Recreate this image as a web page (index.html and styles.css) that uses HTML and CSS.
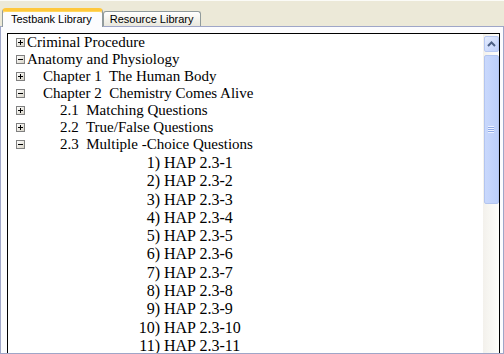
FILE: index.html
```html
<!DOCTYPE html>
<html lang="en">
<head>
    <meta charset="UTF-8">
    <title>Testbank Library</title>
    <link rel="stylesheet" href="styles.css">
</head>
<body>
    <div class="tabs">
        <div class="tab active">Testbank Library</div>
        <div class="tab">Resource Library</div>
    </div>

    <div class="panel">
        <div class="tree-box">
            <div class="tree">
                <!-- top level -->
                <div class="node"><span class="toggle plus"></span><span class="label">Criminal Procedure</span></div>
                <div class="node"><span class="toggle minus"></span><span class="label">Anatomy and Physiology</span></div>
                <!-- chapters -->
                <div class="node"><span class="toggle plus"></span><span class="label lvl-1">Chapter 1  The Human Body</span></div>
                <div class="node"><span class="toggle minus"></span><span class="label lvl-1">Chapter 2  Chemistry Comes Alive</span></div>
                <!-- sections -->
                <div class="node"><span class="toggle plus"></span><span class="label lvl-2">2.1  Matching Questions</span></div>
                <div class="node"><span class="toggle plus"></span><span class="label lvl-2">2.2  True/False Questions</span></div>
                <div class="node"><span class="toggle minus"></span><span class="label lvl-2">2.3  Multiple -Choice Questions</span></div>
                <!-- questions -->
                <div class="questions">
                    <div class="question"><span class="num">1)</span> HAP 2.3-1</div>
                    <div class="question"><span class="num">2)</span> HAP 2.3-2</div>
                    <div class="question"><span class="num">3)</span> HAP 2.3-3</div>
                    <div class="question"><span class="num">4)</span> HAP 2.3-4</div>
                    <div class="question"><span class="num">5)</span> HAP 2.3-5</div>
                    <div class="question"><span class="num">6)</span> HAP 2.3-6</div>
                    <div class="question"><span class="num">7)</span> HAP 2.3-7</div>
                    <div class="question"><span class="num">8)</span> HAP 2.3-8</div>
                    <div class="question"><span class="num">9)</span> HAP 2.3-9</div>
                    <div class="question"><span class="num">10)</span> HAP 2.3-10</div>
                    <div class="question"><span class="num">11)</span> HAP 2.3-11</div>
                </div>
            </div>

            <div class="scrollbar">
                <div class="scroll-btn">
                    <svg width="9" height="6" viewBox="0 0 9 6"><path d="M1 5 L4.5 1.5 L8 5" fill="none" stroke="#4d6185" stroke-width="2"/></svg>
                </div>
                <div class="thumb"><span class="grip"></span></div>
            </div>
        </div>
    </div>
</body>
</html>
```

FILE: styles.css
```css
body {
    margin: 0;
    background-color: #ece9d8;
    border-top: 1px solid #fbfbf7;
    height: 353px;
    overflow: hidden;
}
.tabs {
    display: flex;
    align-items: flex-end;
    height: 25px;
    padding-left: 2px;
    font-family: 'Liberation Sans', Arial, sans-serif;
    font-size: 11px;
    color: #000;
}
.tab {
    height: 14px;
    line-height: 14px;
    padding: 0 7px 0 6px;
    border: 1px solid #919b9c;
    border-bottom: none;
    border-radius: 3px 3px 0 0;
    background: linear-gradient(#ffffff, #f2f1ea 60%, #e9e7dd);
}
.tab.active {
    height: 16px;
    line-height: 17px;
    padding: 0 10px 0 8px;
    border-top: 3px solid #ffc83c;
    border-radius: 4px 4px 0 0;
    box-shadow: inset 0 1px 0 #ffd65e;
    background: #fcfcfe;
    position: relative;
    z-index: 1;
    margin-bottom: -1px;
}
.panel {
    height: 320px;
    border: 1px solid #9fa6c8;
    background-color: #fcfcfe;
    padding: 6px 3px 0 6px;
    overflow: hidden;
}
.tree-box {
    display: flex;
    height: 330px;
    border: 1px solid #000;
    background-color: #fff;
}
.tree {
    flex: 1;
    font-family: 'Liberation Serif', 'Times New Roman', serif;
    font-size: 15px;
    color: #000;
}
.node {
    display: flex;
    align-items: center;
    height: 17px;
    line-height: 17px;
    white-space: pre;
}
.toggle {
    position: relative;
    width: 7px;
    height: 7px;
    margin-left: 8px;
    margin-right: 2px;
    border: 1px solid #808080;
    background: linear-gradient(135deg, #ffffff, #d8d4c8);
}
.toggle::before {
    content: '';
    position: absolute;
    left: 1px;
    top: 3px;
    width: 5px;
    height: 1px;
    background: #000;
}
.toggle.plus::after {
    content: '';
    position: absolute;
    left: 3px;
    top: 1px;
    width: 1px;
    height: 5px;
    background: #000;
}
.label.lvl-1 {
    padding-left: 16px;
}
.label.lvl-2 {
    padding-left: 33px;
}
.questions {
    padding-top: 1px;
    font-size: 16px;
}
.question {
    height: 18.3px;
    line-height: 18.3px;
    white-space: pre;
    padding-left: 112px;
}
.num {
    display: inline-block;
    width: 40px;
    text-align: right;
}
.scrollbar {
    width: 16px;
    display: flex;
    flex-direction: column;
    align-items: center;
    background: linear-gradient(90deg, #f3f1ec, #fefefb);
}
.scroll-btn {
    width: 13px;
    height: 14px;
    margin-top: 2px;
    border: 1px solid #b7c8f2;
    border-radius: 2px;
    background: linear-gradient(135deg, #e3ebfe, #c0d1fa);
    display: flex;
    align-items: center;
    justify-content: center;
}
.thumb {
    width: 13px;
    height: 147px;
    margin-top: 3px;
    border: 1px solid #b3c5ef;
    border-radius: 2px;
    background: linear-gradient(90deg, #c9d8fc, #bccffa);
    display: flex;
    align-items: center;
    justify-content: center;
}
.grip {
    width: 6px;
    height: 7px;
    background: repeating-linear-gradient(#eef3ff 0 1px, #8fa9e6 1px 2px);
}
```
